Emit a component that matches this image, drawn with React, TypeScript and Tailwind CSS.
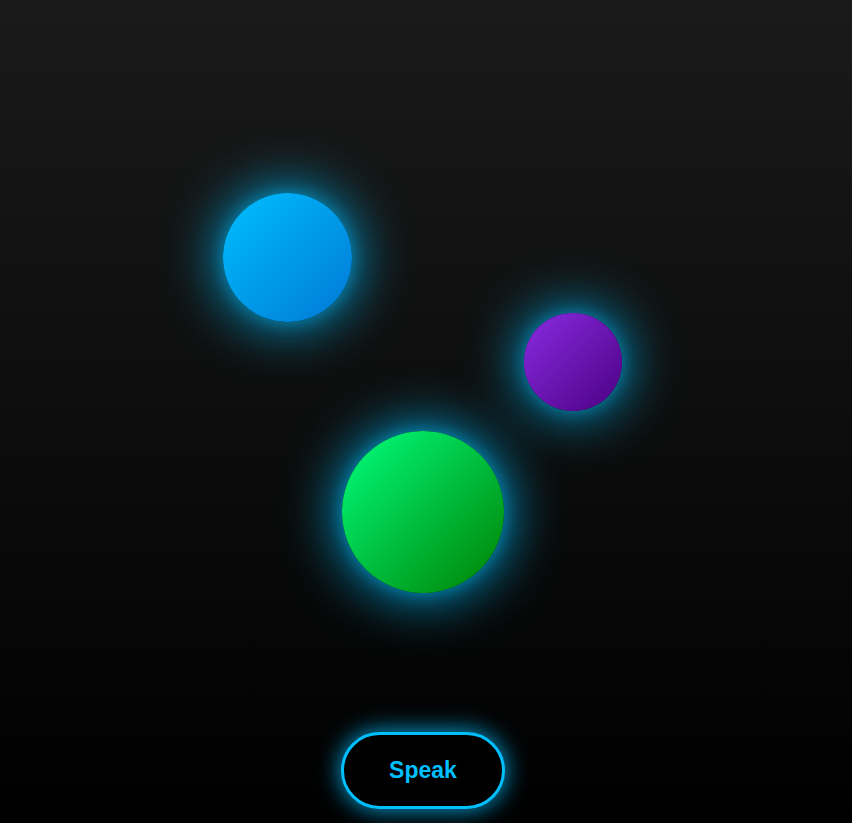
const orbs = [
  { id: 'blue', className: 'left-[223px] top-[193px] w-[129px] h-[129px] bg-[linear-gradient(135deg,#00bfff,#0078d4)]' },
  { id: 'purple', className: 'left-[524px] top-[313px] w-[98px] h-[98px] bg-[linear-gradient(135deg,#8a2be2,#4b0082)]' },
  { id: 'green', className: 'left-[342px] top-[431px] w-[162px] h-[162px] bg-[linear-gradient(135deg,#00ff7f,#008000)]' },
];

export default function App() {
  return (
    <div className="relative h-[823px] w-full overflow-hidden bg-[linear-gradient(to_bottom,#1a1a1a,#000000)] flex flex-col items-center justify-end pb-[14px] font-['Liberation_Sans',Arial,sans-serif]">
      {orbs.map((orb) => (
        <div
          key={orb.id}
          className={`absolute rounded-full shadow-[0_0_60px_#00bfff,0_0_16px_rgba(0,191,255,0.35)] ${orb.className}`}
        />
      ))}
      <button className="relative mr-[6px] w-[164px] h-[77px] rounded-full border-[3px] border-[#00bfff] bg-black text-[#00bfff] text-[23px] font-bold shadow-[0_0_24px_rgba(0,191,255,0.9)]">
        Speak
      </button>
    </div>
  );
}
